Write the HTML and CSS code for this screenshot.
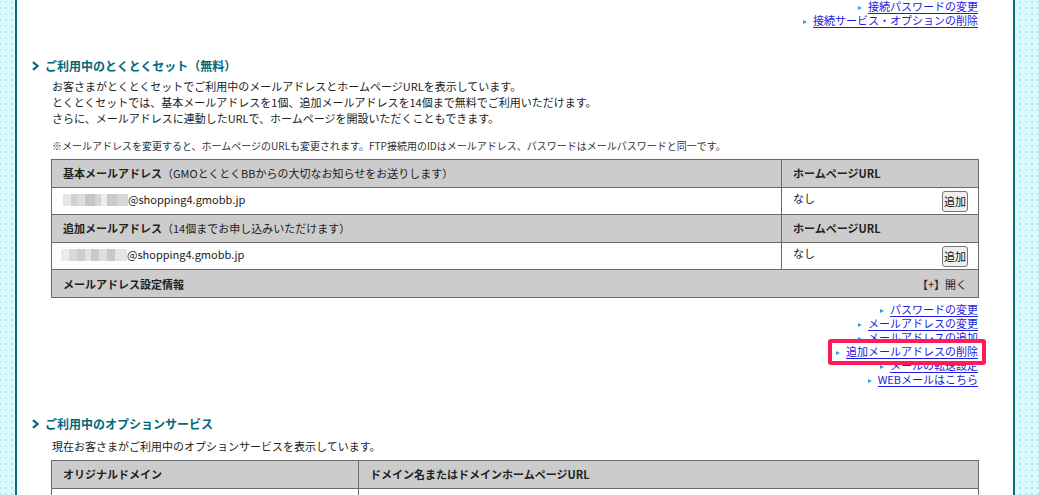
FILE: index.html
```html
<!DOCTYPE html>
<html lang="ja">
<head>
<meta charset="utf-8">
<title>ご利用中のとくとくセット</title>
<link rel="stylesheet" href="styles.css">
</head>
<body>
<div class="page">
  <ul class="links links-top">
    <li><a href="#">接続パスワードの変更</a></li>
    <li><a href="#">接続サービス・オプションの削除</a></li>
  </ul>

  <section class="sec">
    <h2 class="sec-title"><svg class="chev" width="7" height="10" viewBox="0 0 7 10"><polyline points="1,1.2 5.6,5 1,8.8" fill="none" stroke="#00697a" stroke-width="2.2"/></svg>ご利用中のとくとくセット（無料）</h2>
    <div class="desc">
      <p>お客さまがとくとくセットでご利用中のメールアドレスとホームページURLを表示しています。</p>
      <p>とくとくセットでは、基本メールアドレスを1個、追加メールアドレスを14個まで無料でご利用いただけます。</p>
      <p>さらに、メールアドレスに連動したURLで、ホームページを開設いただくこともできます。</p>
    </div>
    <p class="note">※メールアドレスを変更すると、ホームページのURLも変更されます。FTP接続用のIDはメールアドレス、パスワードはメールパスワードと同一です。</p>
    <table class="tbl tbl-mail">
      <colgroup><col class="col-a"><col class="col-b"></colgroup>
      <tr class="head">
        <th><b>基本メールアドレス</b><span class="normal">（GMOとくとくBBからの大切なお知らせをお送りします）</span></th>
        <th><b>ホームページURL</b></th>
      </tr>
      <tr class="row">
        <td><span class="blur blur-1"></span>@shopping4.gmobb.jp</td>
        <td><div class="hp"><span>なし</span><button class="btn" type="button">追加</button></div></td>
      </tr>
      <tr class="head">
        <th><b>追加メールアドレス</b><span class="normal">（14個までお申し込みいただけます）</span></th>
        <th><b>ホームページURL</b></th>
      </tr>
      <tr class="row">
        <td><span class="blur blur-2"></span>@shopping4.gmobb.jp</td>
        <td><div class="hp"><span>なし</span><button class="btn" type="button">追加</button></div></td>
      </tr>
      <tr class="head">
        <th colspan="2"><div class="cfg"><b>メールアドレス設定情報</b><span class="normal">【+】開く</span></div></th>
      </tr>
    </table>
    <ul class="links links-mail">
      <li><a href="#">パスワードの変更</a></li>
      <li><a href="#">メールアドレスの変更</a></li>
      <li><a href="#">メールアドレスの追加</a></li>
      <li><span class="hl"><a href="#">追加メールアドレスの削除</a></span></li>
      <li><a href="#">メールの転送設定</a></li>
      <li><a href="#">WEBメールはこちら</a></li>
    </ul>
  </section>

  <section class="sec sec-opt">
    <h2 class="sec-title"><svg class="chev" width="7" height="10" viewBox="0 0 7 10"><polyline points="1,1.2 5.6,5 1,8.8" fill="none" stroke="#00697a" stroke-width="2.2"/></svg>ご利用中のオプションサービス</h2>
    <div class="desc desc-opt">
      <p>現在お客さまがご利用中のオプションサービスを表示しています。</p>
    </div>
    <table class="tbl tbl-opt">
      <colgroup><col class="col-c"><col class="col-d"></colgroup>
      <tr class="head">
        <th><b>オリジナルドメイン</b></th>
        <th><b>ドメイン名またはドメインホームページURL</b></th>
      </tr>
      <tr class="row">
        <td><a href="#">なし</a></td>
        <td></td>
      </tr>
    </table>
  </section>
</div>
</body>
</html>
```

FILE: styles.css
```css
html, body {
  margin: 0;
  padding: 0;
}
body {
  background-color: #dcfafc;
  background-image: conic-gradient(at 2px 2px, transparent 75%, #a4edf6 0);
  background-size: 6px 6px;
  background-position: 5px 1px;
  font-family: "Noto Sans CJK JP", "Noto Sans", sans-serif;
  font-size: 11px;
  color: #222;
}
.page {
  box-sizing: border-box;
  width: 1000px;
  margin-left: 15px;
  min-height: 600px;
  background: #fff;
  border-left: 2px solid #006f7c;
  border-right: 2px solid #006f7c;
  padding: 0 35px 40px 34px;
}
p { margin: 0; }
a { color: #1d1de0; text-decoration: underline; }

.links {
  list-style: none;
  margin: 0;
  padding: 0;
  text-align: right;
  line-height: 14px;
}
.links li a::before {
  content: "";
  display: inline-block;
  width: 0;
  height: 0;
  border-left: 4px solid #2aa2d6;
  border-top: 2.5px solid transparent;
  border-bottom: 2.5px solid transparent;
  margin-right: 6px;
  vertical-align: 1px;
}
.links li a { text-decoration: none; }
.links li a { background: linear-gradient(#1d1de0, #1d1de0) no-repeat right bottom / calc(100% - 10px) 1px; padding-bottom: 0; }
.links-top { margin-top: -1px; }
.links-mail { margin-top: 4px; }

.hl {
  position: relative;
  z-index: 1;
  display: inline-block;
}
.hl::after {
  content: "";
  position: absolute;
  z-index: -1;
  left: -8px;
  right: -8px;
  top: -5px;
  bottom: -7px;
  border: 4px solid #ff1a5a;
  border-radius: 3px;
  background: #fff;
}

.sec-title {
  margin: 31px 0 0 -19px;
  font-size: 12px;
  font-weight: bold;
  line-height: 16px;
  color: #00697a;
  display: flex;
  align-items: center;
}
.chev { margin-right: 6px; flex: none; }
.sec-opt .sec-title { margin-top: 30px; }

.desc {
  margin-top: 4px;
  padding-left: 1px;
  line-height: 16px;
}
.desc-opt { margin-top: 6px; }

.note {
  margin-top: 13px;
  padding-left: 1px;
  font-size: 10px;
  line-height: 14px;
  color: #333;
}

.tbl {
  width: 927px;
  border-collapse: collapse;
  table-layout: fixed;
  margin-top: 6px;
}
.col-a { width: 730px; }
.col-b { width: 197px; }
.col-c { width: 307px; }
.col-d { width: 620px; }
.tbl th, .tbl td {
  border: 1px solid #6b6b6b;
  padding: 0 11px;
  text-align: left;
  line-height: 14px;
}
.tbl .head th {
  background: #cccccc;
  height: 26.6px;
  vertical-align: middle;
}
.tbl th b { font-weight: bold; }
.tbl .normal { font-weight: normal; }
.tbl .row td {
  height: 22.6px;
  vertical-align: top;
  padding-top: 4px;
  background: #fff;
}
.hp {
  display: flex;
  justify-content: space-between;
  align-items: flex-start;
  margin-right: -1px;
}
.hp span { margin-top: -1px; }
.btn {
  box-sizing: border-box;
  width: 26px;
  height: 21px;
  margin-top: -1px;
  padding: 0;
  font-family: "Noto Sans CJK JP", sans-serif;
  font-size: 11px;
  line-height: 17px;
  color: #111;
  background: #efefef;
  border: 1px solid #767676;
  border-radius: 3px;
}
.cfg {
  display: flex;
  justify-content: space-between;
}
.blur {
  display: inline-block;
  width: 65px;
  height: 12px;
  vertical-align: -2px;
  background:
    linear-gradient(90deg,
      #e6e6e6 0 8px, #d2d2d2 8px 14px, #dcdcdc 14px 22px, #c6c6ca 22px 32px,
      #d8d4d8 32px 38px, #ececec 38px 44px, #cacaca 44px 54px, #d6d6d6 54px 65px);
}
.blur-2 {
  width: 66px;
  margin-left: -2px;
  background:
    linear-gradient(90deg,
      #ececec 0 8px, #dadada 8px 16px, #d0ccd2 16px 24px, #e2e2e2 24px 30px,
      #ccc8d0 30px 38px, #dedede 38px 46px, #c8c8cc 46px 54px, #e4e4e4 54px 66px);
}
```
